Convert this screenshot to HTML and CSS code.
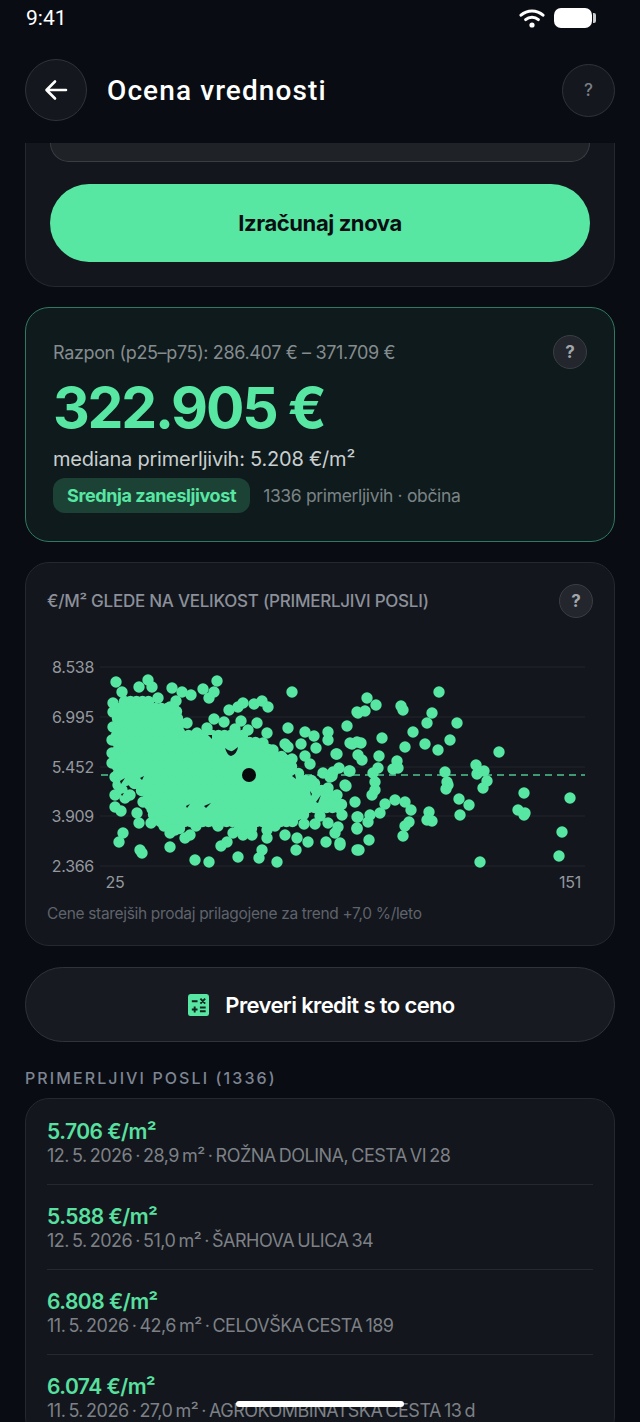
FILE: index.html
```html
<!DOCTYPE html>
<html lang="sl">
<head>
  <meta charset="UTF-8">
  <title>Ocena vrednosti</title>
  <link rel="stylesheet" href="styles.css">
</head>
<body>
  <div class="statusbar">
    <span class="clock">9:41</span>
    <div class="status-icons">
      <svg class="wifi" width="26" height="20" viewBox="0 0 26 20" fill="none" stroke="#fff" stroke-width="3" stroke-linecap="round">
        <path d="M2 7.2C8.2 1.6 17.8 1.6 24 7.2"/>
        <path d="M6.6 11.6C10.2 8.4 15.8 8.4 19.4 11.6"/>
        <circle cx="13" cy="17" r="2.6" fill="#fff" stroke="none"/>
      </svg>
      <div class="battery"></div>
      <div class="battery-tip"></div>
    </div>
  </div>

  <header class="topbar">
    <button class="back">
      <svg width="24" height="22" viewBox="0 0 24 22" fill="none" stroke="#fff" stroke-width="2.6" stroke-linecap="round" stroke-linejoin="round">
        <path d="M22 11H3M11 2.5L2.5 11L11 19.5"/>
      </svg>
    </button>
    <h1>Ocena vrednosti</h1>
    <button class="help help-big">?</button>
  </header>

  <main>
    <section class="card card-cut">
      <div class="input-stub"></div>
      <button class="primary">Izračunaj znova</button>
    </section>

    <section class="card result">
      <div class="result-top">
        <span class="range">Razpon (p25–p75): 286.407 € – 371.709 €</span>
        <button class="help">?</button>
      </div>
      <div class="price">322.905 €</div>
      <div class="median">mediana primerljivih: 5.208 €/m²</div>
      <div class="confidence">
        <span class="pill">Srednja zanesljivost</span>
        <span class="count">1336 primerljivih · občina</span>
      </div>
    </section>

    <section class="card chart-card">
      <div class="chart-head">
        <h2>€/m² glede na velikost (primerljivi posli)</h2>
        <button class="help">?</button>
      </div>
      <svg id="chart" class="chart" viewBox="26 650 588 245" width="588" height="245"></svg>
      <p class="footnote">Cene starejših prodaj prilagojene za trend +7,0 %/leto</p>
    </section>

    <button class="secondary">
      <svg width="21" height="22" viewBox="0 0 22 22" preserveAspectRatio="none">
        <rect width="22" height="22" rx="2.5" fill="#58e6a3"/>
        <path d="M4 7.2H10M13 4.6L18 9.6M18 4.6L13 9.6M4 15.5H10M7 12.5V18.5M12.5 13.6H18.5M12.5 17.2H18.5" stroke="#10231c" stroke-width="2" fill="none"/>
      </svg>
      Preveri kredit s to ceno
    </button>

    <h3 class="list-title">Primerljivi posli (1336)</h3>
    <section class="card deals">
      <div class="deal">
        <div class="deal-price">5.706 €/m²</div>
        <div class="deal-meta">12. 5. 2026 · 28,9 m² · ROŽNA DOLINA, CESTA VI 28</div>
      </div>
      <div class="deal">
        <div class="deal-price">5.588 €/m²</div>
        <div class="deal-meta">12. 5. 2026 · 51,0 m² · ŠARHOVA ULICA 34</div>
      </div>
      <div class="deal">
        <div class="deal-price">6.808 €/m²</div>
        <div class="deal-meta">11. 5. 2026 · 42,6 m² · CELOVŠKA CESTA 189</div>
      </div>
      <div class="deal">
        <div class="deal-price">6.074 €/m²</div>
        <div class="deal-meta">11. 5. 2026 · 27,0 m² · AGROKOMBINATSKA CESTA 13 d</div>
      </div>
    </section>
  </main>

  <div class="home-bar"></div>

  <script src="chart.js"></script>
</body>
</html>
```

FILE: styles.css
```css
* {
  box-sizing: border-box;
}
html, body {
  margin: 0;
  height: 1422px;
  overflow: hidden;
}
body {
  position: relative;
  background: #090c13;
  color: #fff;
  font-family: Inter, "Liberation Sans", sans-serif;
}
button {
  font-family: inherit;
  cursor: pointer;
}

.statusbar {
  height: 36px;
  padding: 0 44px 0 26px;
  display: flex;
  align-items: center;
  justify-content: space-between;
}
.clock {
  font-family: Roboto, sans-serif;
  font-size: 21px;
}
.status-icons {
  display: flex;
  align-items: center;
}
.battery {
  width: 38px;
  height: 20px;
  margin-left: 9px;
  border-radius: 7px;
  background: #fff;
}
.battery-tip {
  width: 3px;
  height: 10px;
  margin-left: 1px;
  border-radius: 0 2px 2px 0;
  background: #ccc;
}

.topbar {
  height: 107px;
  padding: 1px 25px 0;
  display: flex;
  align-items: center;
}
.back {
  width: 62px;
  height: 62px;
  padding: 0;
  display: flex;
  align-items: center;
  justify-content: center;
  border-radius: 50%;
  border: 1.5px solid #303339;
  background: #14171d;
}
.topbar h1 {
  flex: 1;
  margin: 0 0 0 20px;
  font-family: Roboto, sans-serif;
  font-size: 28px;
  font-weight: 500;
  letter-spacing: 1.1px;
}
.help {
  width: 34px;
  height: 34px;
  padding: 0;
  border-radius: 50%;
  border: 1.5px solid #3a3e44;
  background: #23272d;
  color: #a2a6ac;
  font-size: 17px;
  font-weight: 700;
}
.help-big {
  width: 53px;
  height: 53px;
  border-color: #303339;
  background: #14171d;
  color: #7b7f87;
  font-weight: 500;
}

main {
  padding: 0 25px;
}
.card {
  border: 1.5px solid #25282e;
  border-radius: 24px;
  background: #13161c;
}
.card-cut {
  height: 144px;
  padding: 0 24px;
  border-top: 0;
  border-radius: 0 0 30px 30px;
}
.input-stub {
  height: 19px;
  border: 1.5px solid #3a3d42;
  border-top: 0;
  border-radius: 0 0 22px 22px;
  background: #1f2227;
}
.primary {
  display: block;
  width: 100%;
  height: 78px;
  margin-top: 22px;
  border: 0;
  border-radius: 39px;
  background: #58e6a3;
  color: #0a0d12;
  font-size: 22px;
  font-weight: 700;
  letter-spacing: -0.4px;
}

.result {
  height: 235px;
  margin-top: 20px;
  padding: 27px 27px 0;
  border-color: #2e7a60;
  background: #0f1a1c;
}
.result-top {
  display: flex;
  align-items: center;
  justify-content: space-between;
}
.range {
  color: #858c8f;
  font-size: 18px;
  letter-spacing: -0.36px;
}
.price {
  margin-top: 5px;
  color: #58e6a3;
  font-size: 57px;
  font-weight: 700;
  line-height: 68px;
  letter-spacing: -2.2px;
}
.median {
  margin-top: 4px;
  color: #c9cfcf;
  font-size: 20px;
  line-height: 26px;
  letter-spacing: -0.22px;
}
.confidence {
  display: flex;
  align-items: center;
  margin-top: 6px;
}
.pill {
  height: 35px;
  padding: 0 14px;
  display: flex;
  align-items: center;
  border-radius: 12px;
  background: #1c4236;
  color: #58e6a3;
  font-size: 18px;
  font-weight: 700;
  letter-spacing: -0.4px;
}
.count {
  margin-left: 13px;
  color: #7a8486;
  font-size: 17.5px;
  letter-spacing: -0.35px;
}

.chart-card {
  height: 384px;
  margin-top: 20px;
  padding: 21px 21px 0;
}
.chart-head {
  display: flex;
  align-items: center;
  justify-content: space-between;
}
.chart-head h2 {
  margin: 0;
  color: #8b909a;
  font-size: 17px;
  font-weight: 500;
  text-transform: uppercase;
  letter-spacing: -0.25px;
}
.chart {
  display: block;
  margin: 32px -21px 0;
}
.chart text {
  fill: #94989f;
  font-size: 16px;
  font-family: Inter, sans-serif;
  letter-spacing: -0.3px;
}
.footnote {
  margin: 9px 0 0;
  color: #5f636c;
  font-size: 15.5px;
  line-height: 20px;
  letter-spacing: -0.33px;
}

.secondary {
  width: 100%;
  height: 75px;
  margin-top: 21px;
  padding: 0 0 0 3px;
  display: flex;
  align-items: center;
  justify-content: center;
  gap: 16px;
  border: 1.5px solid #303339;
  border-radius: 38px;
  background: #171a20;
  color: #fff;
  font-size: 22px;
  font-weight: 600;
  letter-spacing: -0.62px;
}

.list-title {
  margin: 26px 0 0;
  color: #7e8592;
  font-size: 16px;
  font-weight: 500;
  line-height: 20px;
  text-transform: uppercase;
  letter-spacing: 2.1px;
}
.deals {
  margin-top: 10px;
  padding: 1px 21px 0;
}
.deal {
  height: 85px;
  padding-top: 19px;
  border-bottom: 1px solid #25282e;
}
.deal-price {
  color: #58e0a0;
  font-size: 21px;
  font-weight: 600;
  line-height: 25px;
  letter-spacing: -0.5px;
}
.deal-meta {
  color: #7d8187;
  font-size: 18px;
  line-height: 24px;
  letter-spacing: -0.5px;
  word-spacing: -1.5px;
}

.home-bar {
  position: absolute;
  left: 236px;
  top: 1401px;
  width: 168px;
  height: 6px;
  border-radius: 3px;
  background: #fff;
}
```

FILE: chart.js
```javascript
// scatter of the comparable deals, coordinates are page pixels (see viewBox)
const ns = "http://www.w3.org/2000/svg";
const chart = document.getElementById("chart");
const GREEN = "#58e6a3";

function add(tag, attrs, text) {
  const el = document.createElementNS(ns, tag);
  Object.entries(attrs).forEach(([k, v]) => el.setAttribute(k, v));
  if (text) el.textContent = text;
  chart.appendChild(el);
  return el;
}

const ticks = [["8.538", 667], ["6.995", 717], ["5.452", 767], ["3.909", 816], ["2.366", 866]];
ticks.forEach(([label, y]) => {
  add("line", { x1: 100, x2: 585, y1: y, y2: y, stroke: "#23262c", "stroke-width": 1 });
  add("text", { x: 94, y: y + 6, "text-anchor": "end" }, label);
});
add("text", { x: 115, y: 888, "text-anchor": "middle" }, "25");
add("text", { x: 570, y: 888, "text-anchor": "middle" }, "151");

add("line", {
  x1: 101, x2: 585, y1: 775, y2: 775,
  stroke: "#3f9a73", "stroke-width": 2, "stroke-dasharray": "7 5"
});

// dense part of the cloud
const core = [[116,702],[133,695],[156,702],[175,705],[183,724],[182,739],[210,732],[240,732],
  [259,745],[278,752],[295,769],[311,779],[338,795],[344,808],[332,815],[306,815],[286,825],
  [260,825],[243,831],[233,825],[203,825],[174,828],[152,818],[139,787],[118,778],[114,737]];

function inside(x, y) {
  let hit = false;
  for (let i = 0, j = core.length - 1; i < core.length; j = i++) {
    const [xi, yi] = core[i], [xj, yj] = core[j];
    if ((yi > y) !== (yj > y) && x < (xj - xi) * (y - yi) / (yj - yi) + xi) hit = !hit;
  }
  return hit;
}

const dots = [];
let n = 0;
for (let x = 112; x < 345; x += 6) {
  for (let y = 695; y < 835; y += 6) {
    n++;
    if (inside(x, y)) dots.push([x + (n * 37) % 4 - 1.5, y + (n * 53) % 4 - 1.5]);
  }
}

// loose points around the cloud
dots.push(
  [116,682],[148,680],[139,687],[152,687],[158,698],[172,688],[182,692],[191,695],[203,689],[217,681],
  [214,692],[209,698],[176,701],[170,707],[292,692],[229,710],[238,707],[243,703],[254,704],[262,701],
  [268,707],[214,719],[224,722],[241,721],[257,723],[267,733],[288,728],[305,732],[314,736],[328,732],
  [328,740],[347,726],[357,712],[301,744],[316,748],[336,754],[352,744],[357,742],[358,755],[285,744],
  [288,747],[292,759],[305,756],[310,764],[323,773],[332,776],[339,768],[350,771],[346,786],[355,802],
  [357,817],[357,829],[357,850],[340,843],[338,827],[335,833],[328,823],[326,842],[315,824],[304,824],
  [308,842],[297,838],[296,850],[285,835],[277,862],[259,858],[262,850],[267,838],[267,830],[238,857],
  [209,862],[195,860],[227,842],[221,846],[243,835],[252,835],[233,833],[170,847],[140,850],[142,853],
  [119,842],[123,833],[139,823],[137,813],[152,809],[151,823],[170,833],[175,830],[185,838],[190,835],
  [115,807],[121,811],[125,798],[115,795],[143,802],[115,777],[120,773],[112,763],[112,753],[112,740],
  [113,727],[113,703],[113,712],[122,692],[207,728],[197,733],[187,723],[235,729],[248,730],[263,743],
  [273,750],[122,790],[118,785],[130,795],[152,790],[148,800],[160,820],[196,826],[218,826],[164,826],
  [275,826],[295,816],[320,816],
  // right side
  [439,692],[367,698],[376,705],[358,713],[365,711],[401,706],[403,710],[432,713],[427,723],[457,723],
  [413,732],[382,738],[350,743],[361,743],[450,740],[425,744],[405,747],[438,750],[499,752],[476,765],
  [484,771],[477,774],[487,781],[483,788],[445,772],[447,782],[448,785],[446,789],[459,799],[469,805],
  [460,815],[524,793],[570,798],[518,810],[525,813],[524,815],[562,832],[559,856],[480,862],[429,812],
  [427,820],[432,821],[403,836],[409,822],[405,826],[411,810],[405,802],[395,800],[385,804],[369,840],
  [359,850],[340,845],[358,817],[357,828],[368,822],[370,815],[380,813],[372,795],[375,790],[375,782],
  [373,773],[378,768],[393,769],[397,761],[398,768],[379,756],[362,760],[349,771],[333,772],[330,777],
  [345,785],[342,815],[332,803],[337,795],[328,788],[337,754]
);

dots.forEach(([x, y]) => add("circle", { cx: x, cy: y, r: 5.7, fill: GREEN }));

// small gaps left inside the cloud
const gaps = ["M225 748Q231 753 234 750L238 747Q237 754 231 756Q227 755 225 748Z", "M208 735L212 735L212 739Z",
  "M120 781L125 778L121 784Z", "M140 778L144 776L142 780Z", "M121 794L124 793L122 796Z", "M292 776L295 774L296 779Z",
  "M316 802L321 795L318 803Z", "M310 791L312 794L311 796Z", "M204 806L211 803L206 808Z", "M186 806L190 804L187 808Z"];
gaps.forEach((d) => add("path", { d, fill: "#13161c" }));

add("circle", { cx: 249, cy: 775, r: 7, fill: "#07090d" });
```
